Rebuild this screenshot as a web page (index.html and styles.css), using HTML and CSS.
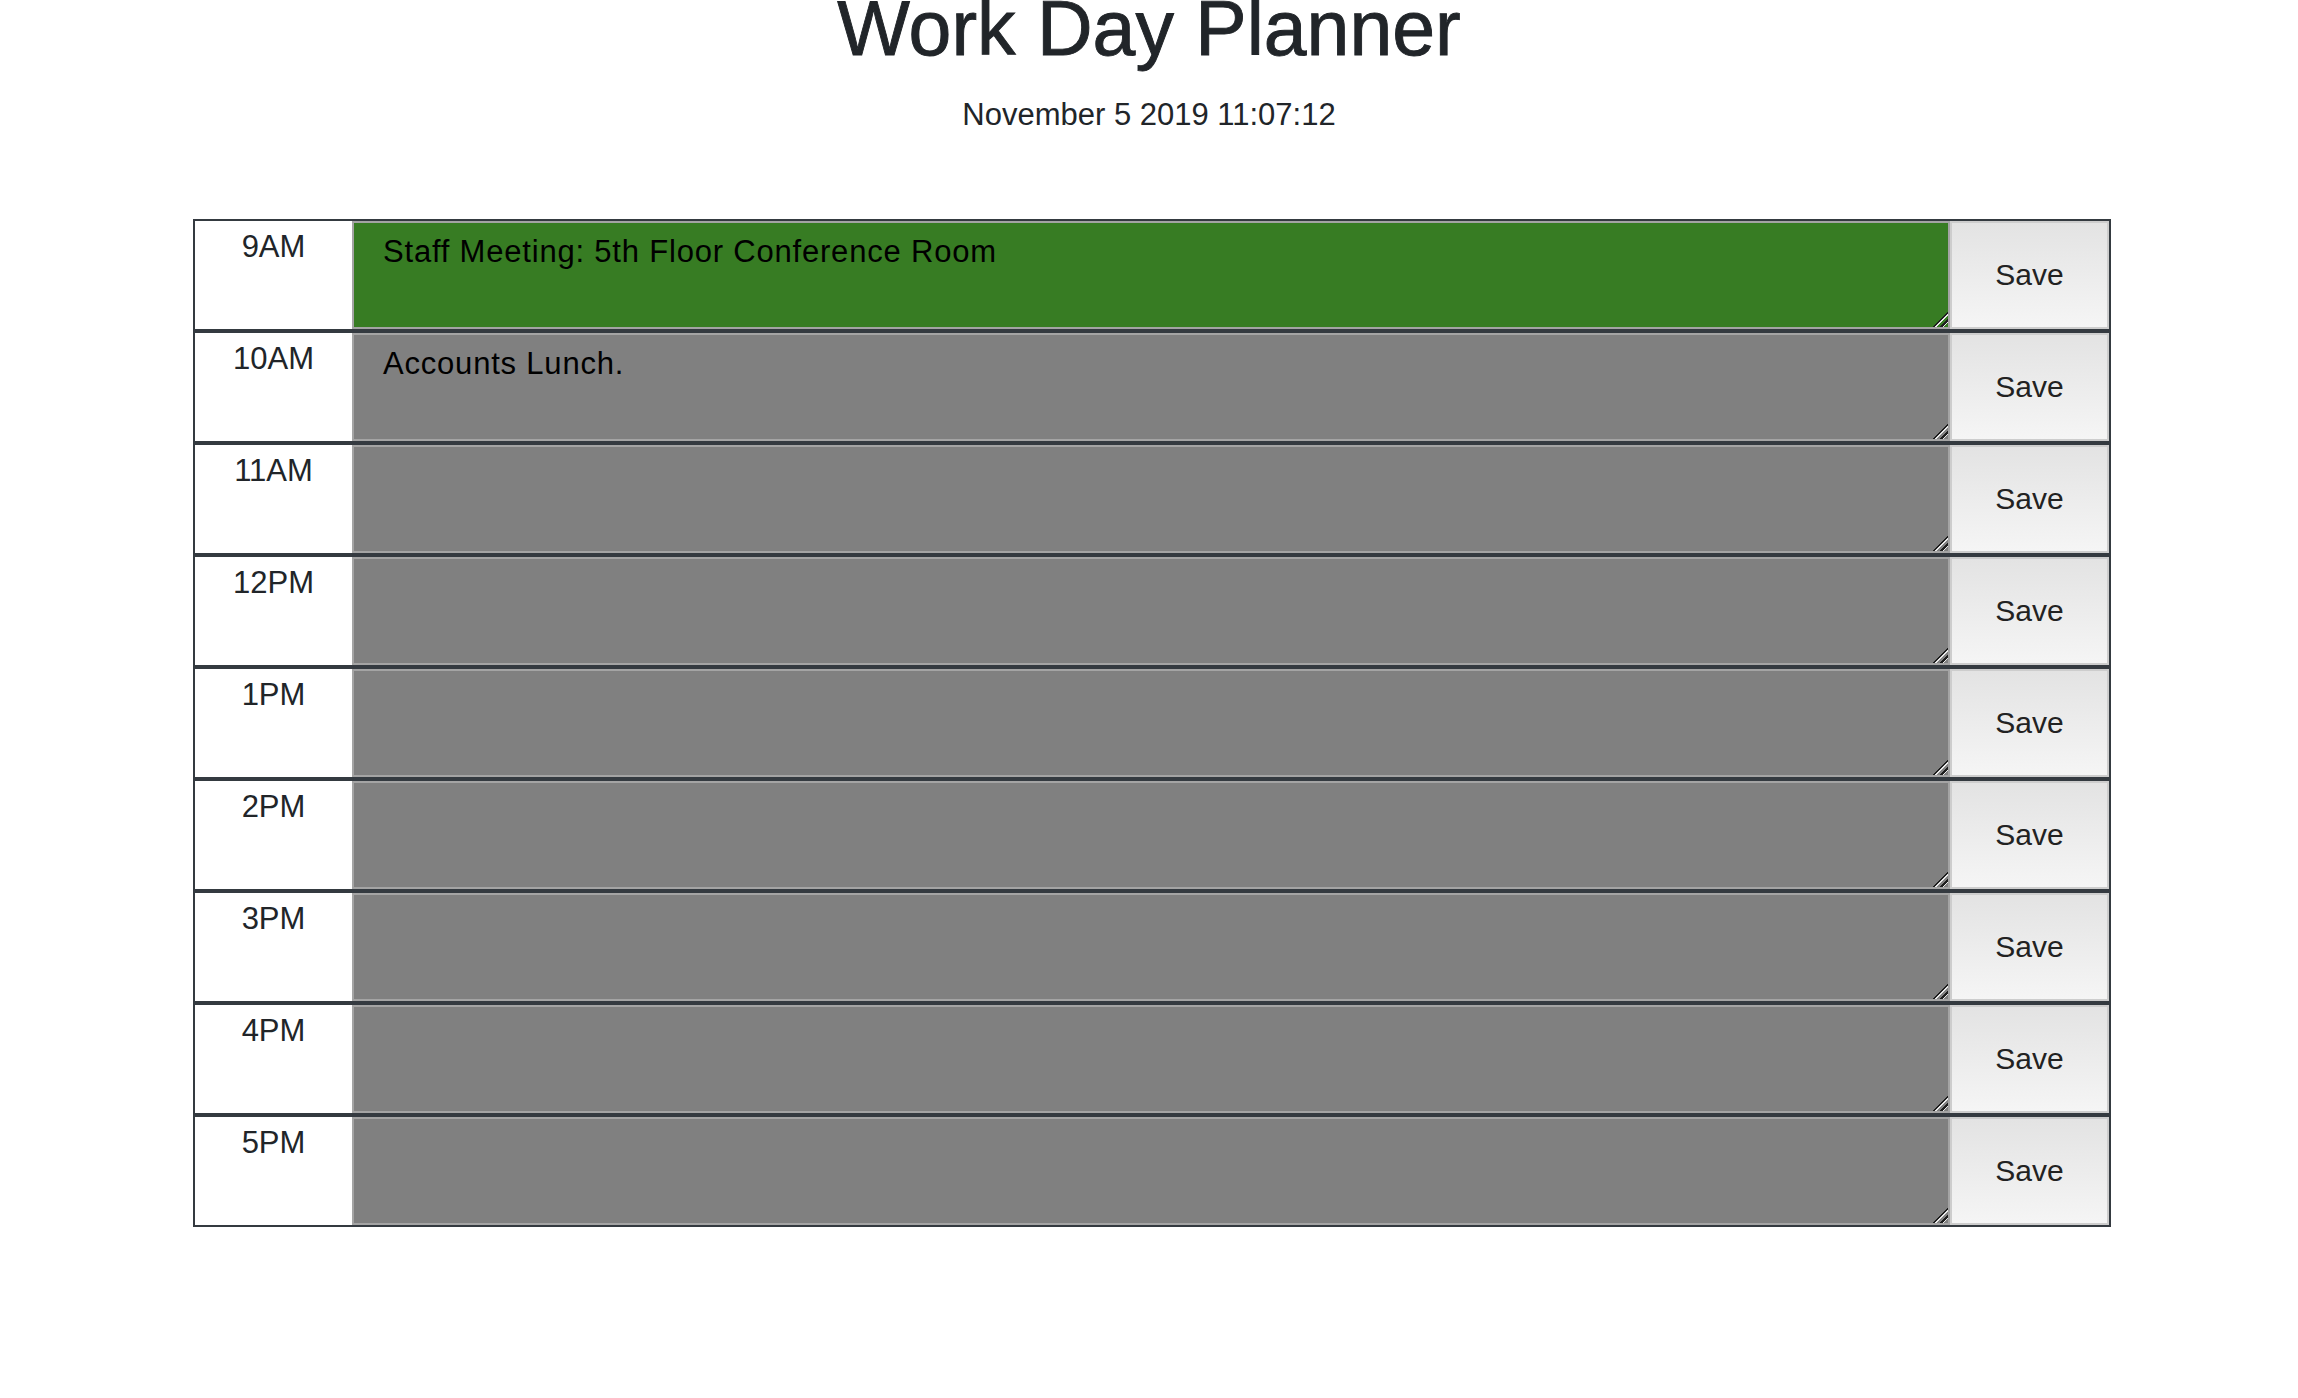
FILE: index.html
```html
<!DOCTYPE html>
<html lang="en">
<head>
<meta charset="utf-8">
<title>Work Day Planner</title>
<link rel="stylesheet" href="styles.css">
</head>
<body>
<header class="jumbotron">
  <h1 class="title">Work Day Planner</h1>
  <p class="lead">November 5 2019 11:07:12</p>
</header>
<main class="planner">
  <div class="time-block">
    <div class="hour">9AM</div>
    <textarea class="description present">Staff Meeting: 5th Floor Conference Room</textarea>
    <button class="save-btn">Save</button>
  </div>
  <div class="time-block">
    <div class="hour">10AM</div>
    <textarea class="description future">Accounts Lunch.</textarea>
    <button class="save-btn">Save</button>
  </div>
  <div class="time-block">
    <div class="hour">11AM</div>
    <textarea class="description future"></textarea>
    <button class="save-btn">Save</button>
  </div>
  <div class="time-block">
    <div class="hour">12PM</div>
    <textarea class="description future"></textarea>
    <button class="save-btn">Save</button>
  </div>
  <div class="time-block">
    <div class="hour">1PM</div>
    <textarea class="description future"></textarea>
    <button class="save-btn">Save</button>
  </div>
  <div class="time-block">
    <div class="hour">2PM</div>
    <textarea class="description future"></textarea>
    <button class="save-btn">Save</button>
  </div>
  <div class="time-block">
    <div class="hour">3PM</div>
    <textarea class="description future"></textarea>
    <button class="save-btn">Save</button>
  </div>
  <div class="time-block">
    <div class="hour">4PM</div>
    <textarea class="description future"></textarea>
    <button class="save-btn">Save</button>
  </div>
  <div class="time-block">
    <div class="hour">5PM</div>
    <textarea class="description future"></textarea>
    <button class="save-btn">Save</button>
  </div>
</main>
</body>
</html>
```

FILE: styles.css
```css
html, body {
  margin: 0;
  padding: 0;
  background: #ffffff;
  overflow: hidden;
}

body {
  font-family: "Liberation Sans", Arial, sans-serif;
  color: #212529;
}

.jumbotron {
  text-align: center;
}

.title {
  font-size: 77px;
  font-weight: 400;
  line-height: 1.2;
  margin: -18px 0 18px;
  color: #212529;
  -webkit-text-stroke: 0.9px #212529;
}

.lead {
  font-size: 31px;
  line-height: 1.5;
  margin: 0;
  color: #212529;
}

.planner {
  width: 1918px;
  margin: 80px 0 0 193px;
  display: flex;
  flex-direction: column;
}

.time-block {
  display: flex;
  height: 112px;
  box-sizing: border-box;
  border: 2px solid #343a40;
}

.hour {
  flex: none;
  width: 157px;
  box-sizing: border-box;
  padding-top: 3px;
  text-align: center;
  font-size: 31px;
  line-height: 1.5;
  background: #ffffff;
  color: #212529;
}

.description {
  flex: 1;
  min-width: 0;
  margin: 0;
  box-sizing: border-box;
  border: 2px solid #a4a4a4;
  padding: 6px 29px;
  font-family: "Liberation Sans", Arial, sans-serif;
  font-size: 31px;
  line-height: 1.5;
  letter-spacing: 0.8px;
  color: #000000;
  outline: none;
}

.description::-webkit-scrollbar {
  width: 16px;
  height: 16px;
  background: transparent;
}

.description::-webkit-resizer {
  background: linear-gradient(135deg,
    transparent 0 47%,
    #1e1e1e 47% 56%,
    #e8e8e8 56% 61%,
    transparent 61% 72%,
    #1e1e1e 72% 81%,
    #e8e8e8 81% 86%,
    transparent 86%);
}

.present {
  background: #377c23;
}

.future {
  background: #808080;
}

.save-btn {
  flex: none;
  width: 159px;
  margin: 0;
  padding: 0;
  box-sizing: border-box;
  border: 2px solid #cdcdcd;
  background: linear-gradient(#e3e3e3, #f5f5f5);
  font-family: "Liberation Sans", Arial, sans-serif;
  font-size: 30px;
  color: #222222;
}
```
